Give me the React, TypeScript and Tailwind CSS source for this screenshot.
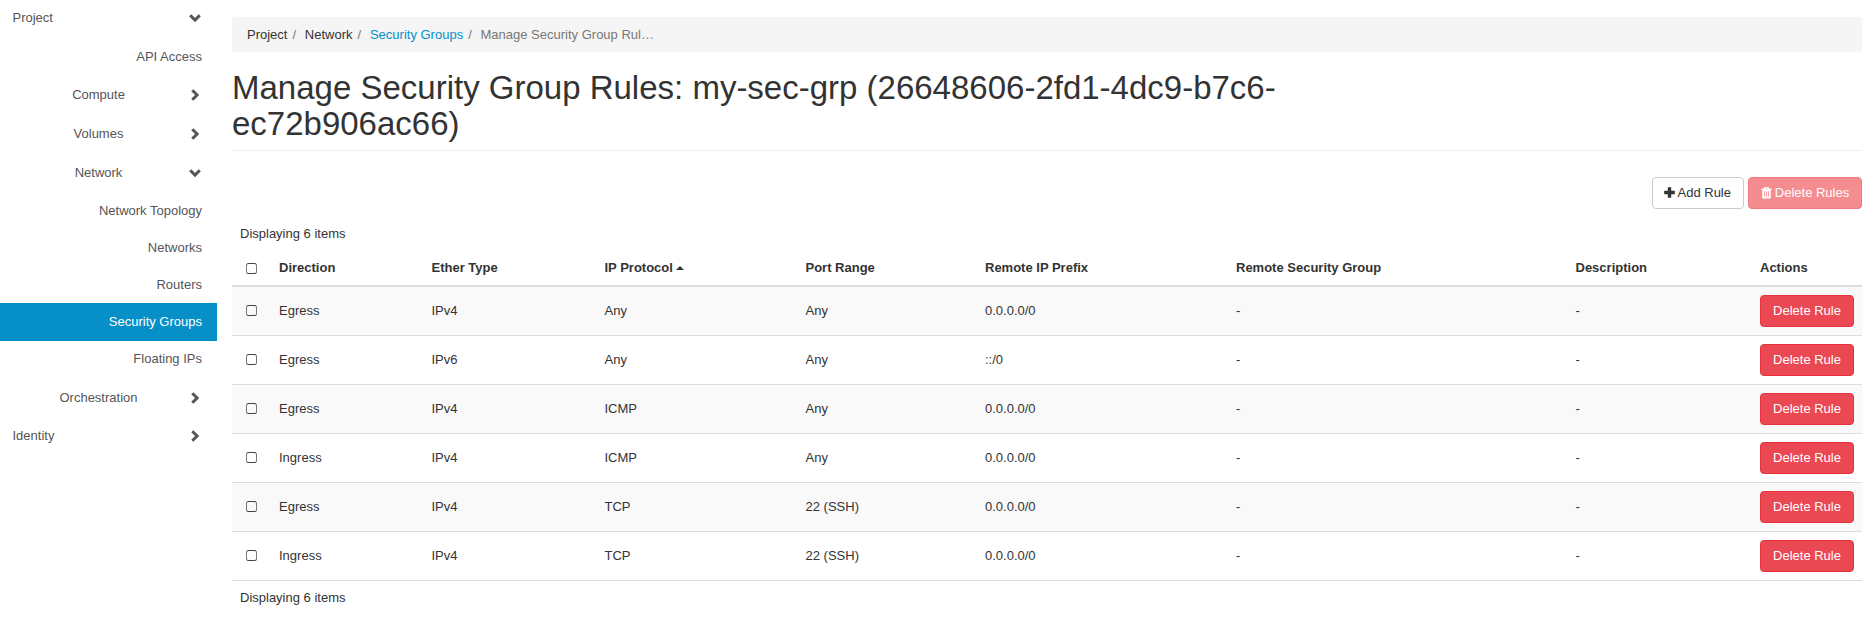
import React from 'react';
import { clsx } from 'clsx';

type NavKind = 'root' | 'group' | 'leaf';

interface NavEntry {
  label: string;
  kind: NavKind;
  height: string;
  open?: boolean;
  active?: boolean;
}

const NAV: NavEntry[] = [
  { label: 'Project', kind: 'root', height: 'h-[36px]', open: true },
  { label: 'API Access', kind: 'leaf', height: 'h-[41px]' },
  { label: 'Compute', kind: 'group', height: 'h-[36px]' },
  { label: 'Volumes', kind: 'group', height: 'h-[41px]' },
  { label: 'Network', kind: 'group', height: 'h-[38px]', open: true },
  { label: 'Network Topology', kind: 'leaf', height: 'h-[37px]' },
  { label: 'Networks', kind: 'leaf', height: 'h-[37px]' },
  { label: 'Routers', kind: 'leaf', height: 'h-[37px]' },
  { label: 'Security Groups', kind: 'leaf', height: 'h-[38px]', active: true },
  { label: 'Floating IPs', kind: 'leaf', height: 'h-[36px]' },
  { label: 'Orchestration', kind: 'group', height: 'h-[41px]' },
  { label: 'Identity', kind: 'root', height: 'h-[36px]' },
];

const COLUMNS = [
  { label: 'Direction', width: 'w-[152.5px]' },
  { label: 'Ether Type', width: 'w-[173px]' },
  { label: 'IP Protocol', width: 'w-[201px]', sorted: true },
  { label: 'Port Range', width: 'w-[179.5px]' },
  { label: 'Remote IP Prefix', width: 'w-[251px]' },
  { label: 'Remote Security Group', width: 'w-[339.5px]' },
  { label: 'Description', width: 'w-[184.5px]' },
  { label: 'Actions', width: 'w-[110px]' },
];

const RULES = [
  ['Egress', 'IPv4', 'Any', 'Any', '0.0.0.0/0', '-', '-'],
  ['Egress', 'IPv6', 'Any', 'Any', '::/0', '-', '-'],
  ['Egress', 'IPv4', 'ICMP', 'Any', '0.0.0.0/0', '-', '-'],
  ['Ingress', 'IPv4', 'ICMP', 'Any', '0.0.0.0/0', '-', '-'],
  ['Egress', 'IPv4', 'TCP', '22 (SSH)', '0.0.0.0/0', '-', '-'],
  ['Ingress', 'IPv4', 'TCP', '22 (SSH)', '0.0.0.0/0', '-', '-'],
];

function Chevron({ open }: { open?: boolean }) {
  return (
    <svg viewBox="0 0 14 14" className={clsx('w-[14px] h-[14px] shrink-0', open && 'rotate-90')}>
      <path d="M4.3 2.2L9.1 7L4.3 11.8" fill="none" stroke="currentColor" strokeWidth="3" />
    </svg>
  );
}

function NavItem({ entry }: { entry: NavEntry }) {
  return (
    <li
      className={clsx(
        'flex items-center pr-[15px]',
        entry.height,
        entry.active ? 'bg-[#078fc8] text-white' : 'text-[#555]'
      )}
    >
      <span
        className={clsx(
          'flex-1',
          entry.kind === 'root' && 'pl-[12.5px]',
          entry.kind === 'group' && 'pl-[9px] text-center',
          entry.kind === 'leaf' && 'text-right'
        )}
      >
        {entry.label}
      </span>
      {entry.kind !== 'leaf' && <Chevron open={entry.open} />}
    </li>
  );
}

function Checkbox() {
  return (
    <span className="block ml-[6px] w-[11px] h-[11px] border border-y-[#444] border-x-[#777] rounded-[2.5px]" />
  );
}

function Separator() {
  return <li className="w-[17.4px] pl-[5px] text-[#777]">/</li>;
}

function Breadcrumb() {
  return (
    <ol className="flex items-center h-[35px] px-[15px] rounded bg-[#f5f5f5]">
      <li>Project</li>
      <Separator />
      <li>Network</li>
      <Separator />
      <li className="text-[#078fc8]">Security Groups</li>
      <Separator />
      <li className="text-[#777]">Manage Security Group Rul…</li>
    </ol>
  );
}

function RulesTable() {
  return (
    <table className="w-[1630px] table-fixed border-collapse text-left">
      <thead>
        <tr className="h-[37px] border-b-2 border-[#ddd]">
          <th className="w-[39px] px-2 pt-[2px]">
            <Checkbox />
          </th>
          {COLUMNS.map(col => (
            <th key={col.label} className={clsx('px-2 pt-[2px] font-bold', col.width)}>
              {col.label}
              {col.sorted && (
                <svg viewBox="0 0 8 4" className="inline-block ml-[3px] mb-[2px] w-2 h-1">
                  <path d="M0 4L4 0L8 4Z" fill="currentColor" />
                </svg>
              )}
            </th>
          ))}
        </tr>
      </thead>
      <tbody>
        {RULES.map((rule, i) => (
          <tr key={i} className="h-[49px] border-b border-[#ddd] odd:bg-[#f9f9f9]">
            <td className="px-2">
              <Checkbox />
            </td>
            {rule.map((value, j) => (
              <td key={j} className="px-2">
                {value}
              </td>
            ))}
            <td className="px-2">
              <button className="block w-[94px] h-8 rounded border border-[#e6323c] bg-[#ea4852] text-white">
                Delete Rule
              </button>
            </td>
          </tr>
        ))}
      </tbody>
    </table>
  );
}

export default function App() {
  return (
    <div className="flex w-[1874px] h-[621px] overflow-hidden bg-white font-['Liberation_Sans',Arial,sans-serif] text-[13px] leading-[18px] text-[#333]">
      <ul className="w-[217px] shrink-0">
        {NAV.map(entry => (
          <NavItem key={entry.label} entry={entry} />
        ))}
      </ul>

      <main className="w-[1630px] ml-[15px] pt-[17px]">
        <Breadcrumb />

        <div className="h-[99px] pt-[18px] border-b border-[#eee]">
          <h1 className="w-[1085px] text-[33px] leading-[36px]">
            Manage Security Group Rules: my-sec-grp (26648606-2fd1-4dc9-b7c6-ec72b906ac66)
          </h1>
        </div>

        <div className="flex justify-end gap-1 mt-[26px]">
          <button className="flex items-center justify-center gap-[2.5px] w-[92px] h-8 pr-px rounded border border-[#ccc]">
            <svg viewBox="0 0 11 11" className="w-[11px] h-[11px] mb-[2px]">
              <path d="M3.8 0.2h3.4v3.6H10.8v3.4H7.2v3.6H3.8V7.2H0.2V3.8H3.8z" fill="currentColor" />
            </svg>
            Add Rule
          </button>
          <button className="flex items-center justify-center gap-[3px] w-[114px] h-8 rounded border border-[#f1797f] bg-[#f58c90] text-white">
            <svg viewBox="0 0 11 12" className="w-[11px] h-[12px] mb-px">
              <path d="M3.5 2V0.9h4V2M0.3 2.4h10.4" fill="none" stroke="currentColor" strokeWidth="1.2" />
              <path
                d="M1.2 3h8.6v7.4a1.2 1.2 0 0 1-1.2 1.2H2.4a1.2 1.2 0 0 1-1.2-1.2zM3.1 4.2v5.6h.8V4.2zM5.1 4.2v5.6h.8V4.2zM7.1 4.2v5.6h.8V4.2z"
                fill="currentColor"
                fillRule="evenodd"
              />
            </svg>
            Delete Rules
          </button>
        </div>

        <p className="mt-4 h-[24px] px-2">Displaying 6 items</p>
        <RulesTable />
        <p className="mt-2 px-2">Displaying 6 items</p>
      </main>
    </div>
  );
}
